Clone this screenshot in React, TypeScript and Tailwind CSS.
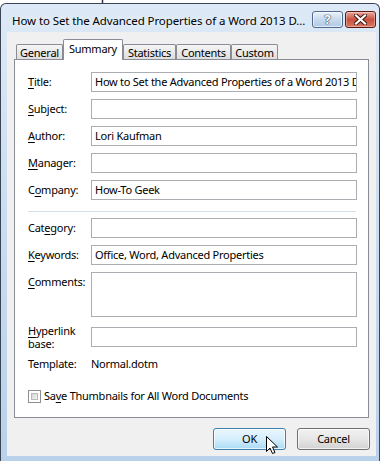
import type { ReactNode } from "react"

const FONT = "font-['Segoe_UI','Noto_Sans',sans-serif]"

const tabs = [
  { name: "General", w: "w-[47px]", active: false },
  { name: "Summary", w: "w-[60px]", active: true },
  { name: "Statistics", w: "w-[53px]", active: false },
  { name: "Contents", w: "w-[55px]", active: false },
  { name: "Custom", w: "w-[47px]", active: false },
]

function Acc({ children }: { children: ReactNode }) {
  return <span className="underline underline-offset-[2px]">{children}</span>
}

function Field({
  label,
  value,
  className,
}: {
  label: ReactNode
  value?: string
  className?: string
}) {
  return (
    <div className={`flex items-center ${className ?? ""}`}>
      <div className="w-[63px] leading-[14px]">{label}</div>
      <div className="w-[266px] h-[20px] border border-[#abadb3] bg-white pl-[3px] overflow-hidden whitespace-nowrap leading-[18px]">
        {value}
      </div>
    </div>
  )
}

export default function App() {
  return (
    <div className={`relative w-[382px] h-[461px] overflow-hidden bg-white text-[11px] tracking-[-0.25px] text-black ${FONT}`}>
      {/* bottom of the page behind the dialog */}
      <div className="h-[3px] overflow-hidden pl-[2px]">
        <div className="-mt-[13px] text-[15px] leading-[15px] text-[#222]">Document Properties</div>
      </div>

      <div className="w-[380px] h-[458px] rounded-t-[6px] border border-b-0 border-[#3a4656] bg-linear-to-b from-[#dde9f6] via-[#c9dcf0] to-[#b9d1ea]">
        {/* title bar */}
        <div className="h-[28px] flex justify-between">
          <div className="pl-[11px] pt-[9px] text-[11.5px] tracking-[-0.1px] leading-[16px] whitespace-nowrap text-black [text-shadow:0_0_6px_#ffffff]">
            How to Set the Advanced Properties of a Word 2013 D...
          </div>
          <div className="flex shrink-0 gap-[2px] pt-[7px] pr-[3px]">
            <div className="w-[31px] h-[17px] rounded-[3px] border border-[#52698a] bg-linear-to-b from-[#eaf1f9] via-[#c7d9ed] to-[#b1c9e6] flex items-center justify-center shadow-[inset_0_0_0_1px_rgba(255,255,255,0.6)]">
              <span className="text-white font-bold text-[13px] leading-none [text-shadow:0_0_1px_#2d3b4d,0_0_1px_#2d3b4d,0_0_1px_#2d3b4d]">
                ?
              </span>
            </div>
            <div className="w-[31px] h-[17px] rounded-[3px] border border-[#5c1a14] bg-linear-to-b from-[#e9a89c] via-[#c8503c] to-[#d9775f] flex items-center justify-center shadow-[inset_0_0_0_1px_rgba(255,255,255,0.35)]">
              <svg width="13" height="11" viewBox="0 0 13 11">
                <path d="M2 1.5 L11 9.5 M11 1.5 L2 9.5" stroke="#3a1410" strokeWidth="4" strokeLinecap="square" />
                <path d="M2 1.5 L11 9.5 M11 1.5 L2 9.5" stroke="#ffffff" strokeWidth="2.2" strokeLinecap="square" />
              </svg>
            </div>
          </div>
        </div>

        {/* client area */}
        <div className="ml-[6px] w-[369px] h-[424px] bg-[#f0f0f0] pt-[7px] px-[7px] flex flex-col">
          <div className="h-[20px] flex items-end pl-[2px]">
            {tabs.map((t) =>
              t.active ? (
                <div
                  key={t.name}
                  className={`${t.w} h-[21px] -mb-px relative z-10 bg-white border border-b-0 border-[#898c95] rounded-t-[2px] text-center pt-[1px] leading-[16px]`}
                >
                  {t.name}
                </div>
              ) : (
                <div
                  key={t.name}
                  className={`${t.w} h-[15px] border border-b-0 border-[#898c95] rounded-t-[2px] bg-linear-to-b from-[#f5f5f5] to-[#dedede] text-center leading-[15px]`}
                >
                  {t.name}
                </div>
              )
            )}
          </div>

          <div className="h-[359px] border border-[#898c95] bg-white pl-[13px] pt-[12px] flex flex-col">
            <Field label={<><Acc>T</Acc>itle:</>} value="How to Set the Advanced Properties of a Word 2013 Document" />
            <Field className="mt-[7px]" label={<><Acc>S</Acc>ubject:</>} />
            <Field className="mt-[7px]" label={<><Acc>A</Acc>uthor:</>} value="Lori Kaufman" />
            <Field className="mt-[7px]" label={<><Acc>M</Acc>anager:</>} />
            <Field className="mt-[7px]" label={<>C<Acc>o</Acc>mpany:</>} value="How-To Geek" />

            <div className="mt-[11px] w-[328px] h-px bg-[#d5dfe5]" />

            <Field className="mt-[6px]" label={<>Cat<Acc>e</Acc>gory:</>} />
            <Field className="mt-[7px]" label={<><Acc>K</Acc>eywords:</>} value="Office, Word, Advanced Properties" />

            <div className="mt-[7px] flex items-start">
              <div className="w-[63px] pt-[3px] leading-[14px]">
                <Acc>C</Acc>omments:
              </div>
              <div className="w-[266px] h-[45px] border border-[#abadb3] bg-white" />
            </div>

            <div className="mt-[10px] h-[20px] flex items-center">
              <div className="w-[63px] leading-[13.5px]">
                <Acc>H</Acc>yperlink
                <br />
                base:
              </div>
              <div className="w-[266px] h-[20px] border border-[#abadb3] bg-white" />
            </div>

            <div className="mt-[10px] flex items-center h-[14px] leading-[14px]">
              <div className="w-[63px]">Template:</div>
              <div>Normal.dotm</div>
            </div>

            <div className="mt-[18px] flex items-center gap-[3px]">
              <div className="w-[13px] h-[13px] border border-[#8e8f8f] bg-white p-[2px]">
                <div className="w-full h-full border border-[#b9b9b9] bg-linear-to-br from-[#d4d4d4] to-[#f4f4f4]" />
              </div>
              <div className="leading-[14px]">
                Sa<Acc>v</Acc>e Thumbnails for All Word Documents
              </div>
            </div>
          </div>

          <div className="mt-[10px] flex justify-end gap-[11px] -mr-[1px]">
            <div className="w-[73px] h-[22px] rounded-[3px] border border-[#3c7fb1] bg-linear-to-b from-[#eaf6fd] via-[#d5eefc] to-[#a9daf6] shadow-[inset_0_0_0_1px_rgba(255,255,255,0.7)] flex items-center justify-center">
              OK
            </div>
            <div className="w-[73px] h-[22px] rounded-[3px] border border-[#707070] bg-linear-to-b from-[#f2f2f2] via-[#e6e6e6] to-[#d2d2d2] shadow-[inset_0_0_0_1px_rgba(255,255,255,0.7)] flex items-center justify-center">
              Cancel
            </div>
          </div>
        </div>
      </div>

      {/* mouse pointer over OK */}
      <svg className="absolute left-[266px] top-[436px]" width="13" height="19" viewBox="0 0 13 19">
        <path
          d="M0.5 0.5 L0.5 15.5 L4 12 L6.5 17.5 L9 16.5 L6.5 11 L11.5 11 Z"
          fill="#ffffff"
          stroke="#000000"
          strokeWidth="1"
          strokeLinejoin="miter"
        />
      </svg>
    </div>
  )
}
